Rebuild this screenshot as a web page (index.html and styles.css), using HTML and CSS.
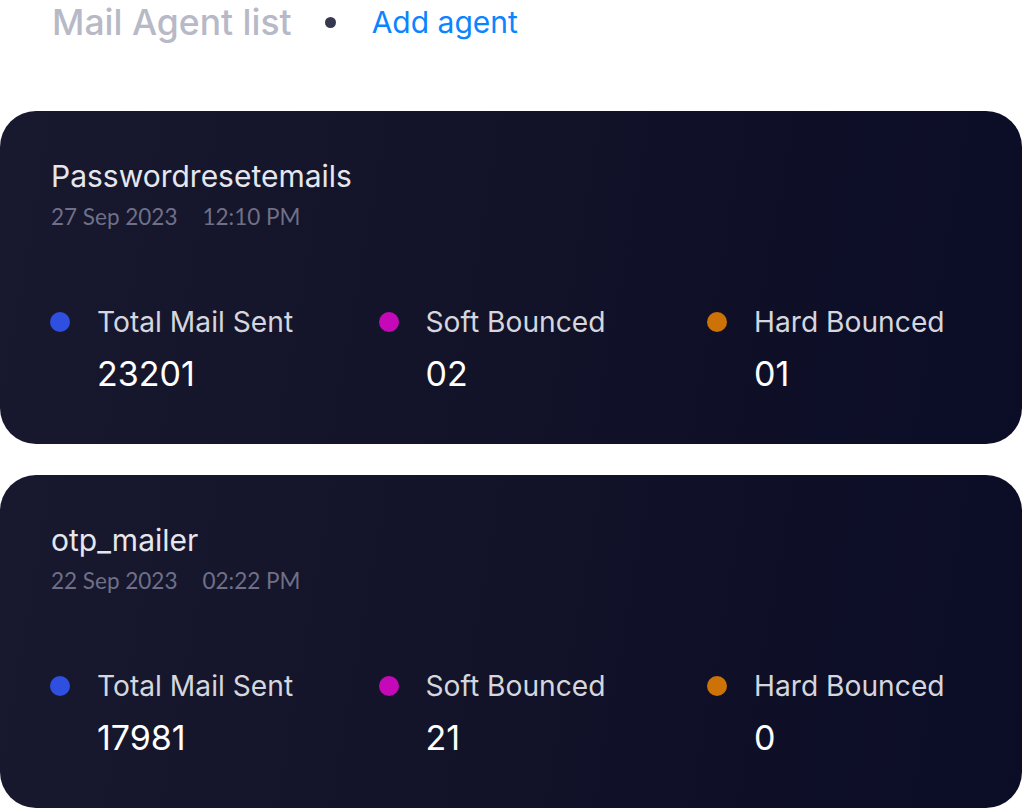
FILE: index.html
```html
<!DOCTYPE html>
<html>
<head>
<meta charset="utf-8">
<link rel="stylesheet" href="styles.css">
</head>
<body>
<div class="page">
  <header class="head">
    <h1 class="title">Mail Agent list</h1>
    <span class="sep"></span>
    <a class="add" href="#">Add agent</a>
  </header>
  <section class="card">
    <div class="name">Passwordresetemails</div>
    <div class="date"><span>27 Sep 2023</span><span>12:10 PM</span></div>
    <div class="stats">
      <div class="stat"><span class="dot blue"></span><div><div class="label">Total Mail Sent</div><div class="value">23201</div></div></div>
      <div class="stat"><span class="dot pink"></span><div><div class="label">Soft Bounced</div><div class="value">02</div></div></div>
      <div class="stat"><span class="dot orange"></span><div><div class="label">Hard Bounced</div><div class="value">01</div></div></div>
    </div>
  </section>
  <section class="card">
    <div class="name">otp_mailer</div>
    <div class="date"><span>22 Sep 2023</span><span>02:22 PM</span></div>
    <div class="stats">
      <div class="stat"><span class="dot blue"></span><div><div class="label">Total Mail Sent</div><div class="value">17981</div></div></div>
      <div class="stat"><span class="dot pink"></span><div><div class="label">Soft Bounced</div><div class="value">21</div></div></div>
      <div class="stat"><span class="dot orange"></span><div><div class="label">Hard Bounced</div><div class="value">0</div></div></div>
    </div>
  </section>
</div>
</body>
</html>
```

FILE: styles.css
```css
* { box-sizing: border-box; }
html, body { margin: 0; padding: 0; background: #fff; }
body { font-family: Inter, "Noto Sans", sans-serif; width: 1024px; height: 810px; overflow: hidden; }
.page { width: 1022px; }
.head { display: flex; align-items: center; height: 44px; padding-left: 52px; padding-top: 1px; }
.title { margin: 0; font-size: 35.5px; font-weight: 500; color: #b7b9c7; line-height: 43px; }
.sep { width: 11px; height: 11px; border-radius: 50%; background: #363850; margin: 0 36px 0 33px; }
.add { font-size: 30px; color: #0b84ff; text-decoration: none; line-height: 43px; }
.card {
  margin-top: 67px; height: 333px; border-radius: 36px;
  background: linear-gradient(100deg, #18182f 0%, #121329 50%, #0b0c26 100%);
  padding: 47px 0 0 51px;
}
.card + .card { margin-top: 31px; }
.name { font-size: 30px; color: #e6e7ee; line-height: 36px; }
.date { font-family: Lato, sans-serif; font-size: 22.5px; line-height: 27px; color: #6f7087; margin-top: 8.5px; display: flex; gap: 25px; }
.stats { display: flex; margin-top: 75px; margin-left: -1px; }
.stat { flex: none; width: 328.5px; display: flex; gap: 27px; }
.dot { width: 20px; height: 20px; border-radius: 50%; margin-top: 7px; flex: none; }
.blue { background: #2f4fe0; }
.pink { background: #c509b8; }
.orange { background: #cc7206; }
.label { font-size: 28.2px; color: #d5d6de; line-height: 34px; }
.value { font-size: 34px; color: #fff; margin-top: 14.5px; line-height: 41px; margin-left: 0; }
```
